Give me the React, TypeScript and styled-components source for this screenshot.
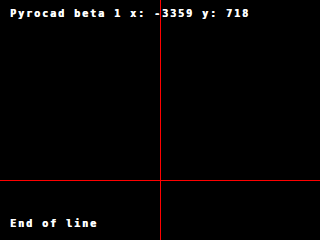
import React from "react";
import styled, { createGlobalStyle } from "styled-components";

const Global = createGlobalStyle`
  html, body { margin: 0; padding: 0; background: #000; }
  body { width: 320px; height: 240px; overflow: hidden; }
`;

const Screen = styled.div`
  position: relative;
  width: 320px;
  height: 240px;
  box-sizing: border-box;
  background: #000;
  display: flex;
  flex-direction: column;
  justify-content: space-between;
  padding: 9px 0 11px 10px;
`;

const Line = styled.div`
  font-family: "DejaVu Sans Mono", "Liberation Mono", monospace;
  font-weight: bold;
  font-size: 10px;
  line-height: 10px;
  letter-spacing: 1.98px;
  color: #fff;
  white-space: pre;
  text-shadow: 0.6px 0 0 #fff;
`;

const Crosshair = styled.svg`
  position: absolute;
  left: 0;
  top: 0;
  pointer-events: none;
`;

export default function App() {
  const cx = 160;
  const cy = 180;
  return (
    <>
      <Global />
      <Screen>
        <Line>Pyrocad beta 1 x: -3359 y: 718</Line>
        <Line>End of line</Line>
        <Crosshair width={320} height={240} viewBox="0 0 320 240">
          <line x1={cx + 0.5} y1={0} x2={cx + 0.5} y2={240} stroke="#ff0000" strokeWidth={1} shapeRendering="crispEdges" />
          <line x1={0} y1={cy + 0.5} x2={320} y2={cy + 0.5} stroke="#ff0000" strokeWidth={1} shapeRendering="crispEdges" />
        </Crosshair>
      </Screen>
    </>
  );
}
